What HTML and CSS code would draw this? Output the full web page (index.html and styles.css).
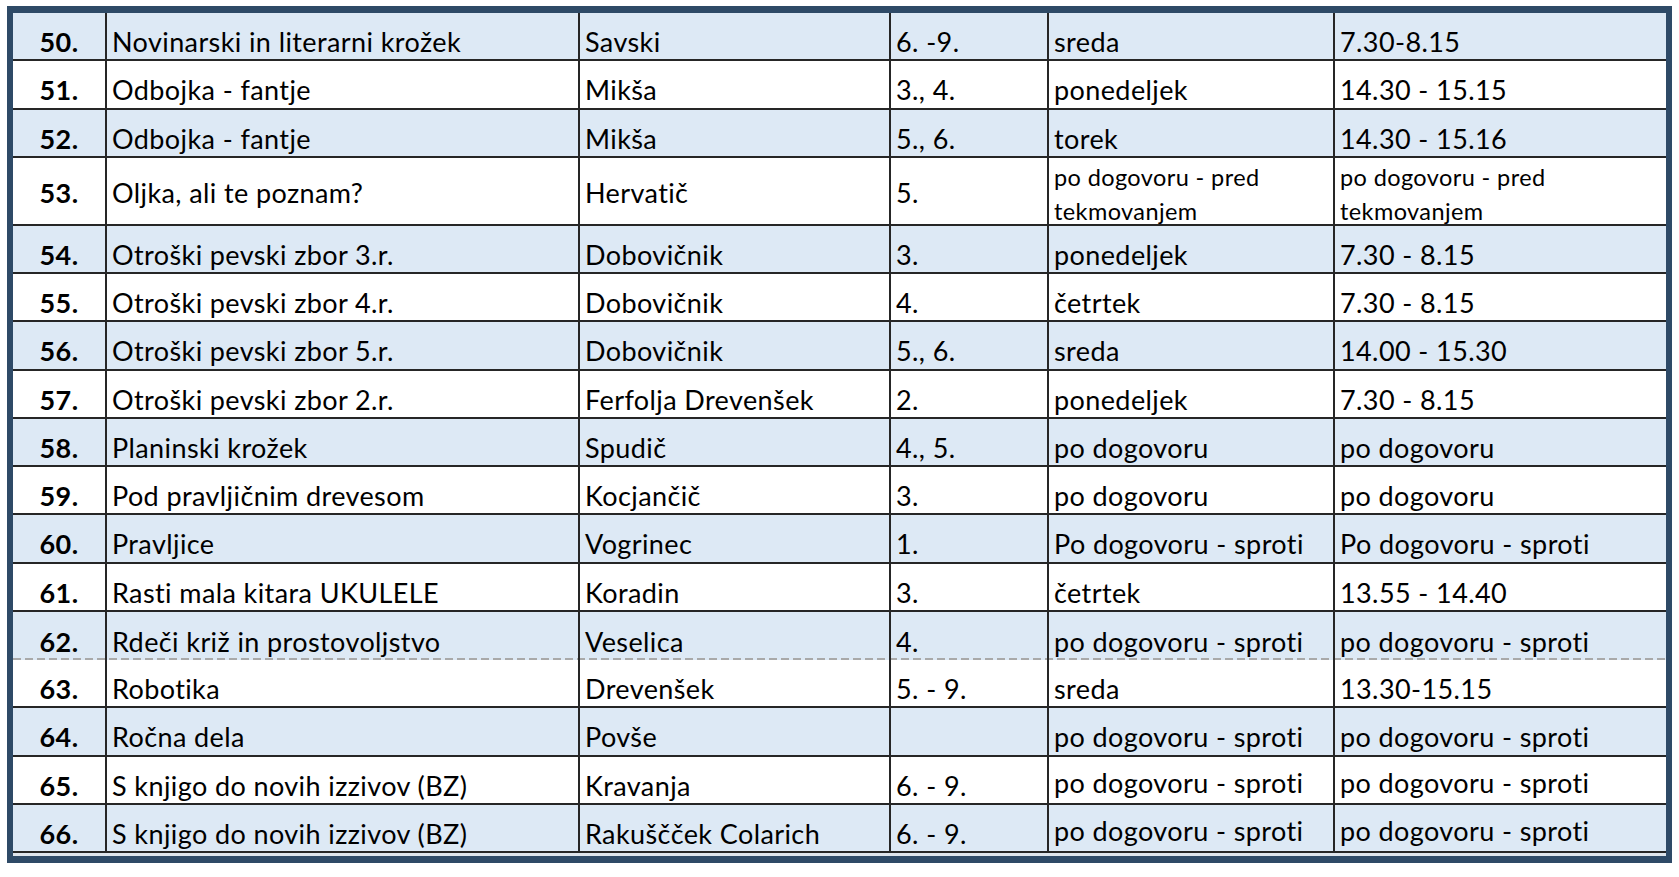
FILE: index.html
```html
<!DOCTYPE html>
<html lang="sl">
<head>
<meta charset="utf-8">
<title>Interesne dejavnosti</title>
<link rel="stylesheet" href="styles.css">
</head>
<body>
<div class="frame">
  <div class="row alt"><div class="c num">50.</div><div class="c">Novinarski in literarni krožek</div><div class="c">Savski</div><div class="c">6. -9.</div><div class="c">sreda</div><div class="c">7.30-8.15</div></div>
  <div class="row"><div class="c num">51.</div><div class="c">Odbojka - fantje</div><div class="c">Mikša</div><div class="c">3., 4.</div><div class="c">ponedeljek</div><div class="c">14.30 - 15.15</div></div>
  <div class="row alt"><div class="c num">52.</div><div class="c">Odbojka - fantje</div><div class="c">Mikša</div><div class="c">5., 6.</div><div class="c">torek</div><div class="c">14.30 - 15.16</div></div>
  <div class="row tall"><div class="c num">53.</div><div class="c">Oljka, ali te poznam?</div><div class="c">Hervatič</div><div class="c">5.</div><div class="c small">po dogovoru - pred<br>tekmovanjem</div><div class="c small">po dogovoru - pred<br>tekmovanjem</div></div>
  <div class="row alt"><div class="c num">54.</div><div class="c">Otroški pevski zbor 3.r.</div><div class="c">Dobovičnik</div><div class="c">3.</div><div class="c">ponedeljek</div><div class="c">7.30 - 8.15</div></div>
  <div class="row"><div class="c num">55.</div><div class="c">Otroški pevski zbor 4.r.</div><div class="c">Dobovičnik</div><div class="c">4.</div><div class="c">četrtek</div><div class="c">7.30 - 8.15</div></div>
  <div class="row alt"><div class="c num">56.</div><div class="c">Otroški pevski zbor 5.r.</div><div class="c">Dobovičnik</div><div class="c">5., 6.</div><div class="c">sreda</div><div class="c">14.00 - 15.30</div></div>
  <div class="row"><div class="c num">57.</div><div class="c">Otroški pevski zbor 2.r.</div><div class="c">Ferfolja Drevenšek</div><div class="c">2.</div><div class="c">ponedeljek</div><div class="c">7.30 - 8.15</div></div>
  <div class="row alt"><div class="c num">58.</div><div class="c">Planinski krožek</div><div class="c">Spudič</div><div class="c">4., 5.</div><div class="c">po dogovoru</div><div class="c">po dogovoru</div></div>
  <div class="row"><div class="c num">59.</div><div class="c">Pod pravljičnim drevesom</div><div class="c">Kocjančič</div><div class="c">3.</div><div class="c">po dogovoru</div><div class="c">po dogovoru</div></div>
  <div class="row alt"><div class="c num">60.</div><div class="c">Pravljice</div><div class="c">Vogrinec</div><div class="c">1.</div><div class="c">Po dogovoru - sproti</div><div class="c">Po dogovoru - sproti</div></div>
  <div class="row"><div class="c num">61.</div><div class="c">Rasti mala kitara UKULELE</div><div class="c">Koradin</div><div class="c">3.</div><div class="c">četrtek</div><div class="c">13.55 - 14.40</div></div>
  <div class="row alt dashed"><div class="c num">62.</div><div class="c">Rdeči križ in prostovoljstvo</div><div class="c">Veselica</div><div class="c">4.</div><div class="c">po dogovoru - sproti</div><div class="c">po dogovoru - sproti</div></div>
  <div class="row"><div class="c num">63.</div><div class="c">Robotika</div><div class="c">Drevenšek</div><div class="c">5. - 9.</div><div class="c">sreda</div><div class="c">13.30-15.15</div></div>
  <div class="row alt"><div class="c num">64.</div><div class="c">Ročna dela</div><div class="c">Povše</div><div class="c"></div><div class="c">po dogovoru - sproti</div><div class="c">po dogovoru - sproti</div></div>
  <div class="row"><div class="c num">65.</div><div class="c">S knjigo do novih izzivov (BZ)</div><div class="c">Kravanja</div><div class="c">6. - 9.</div><div class="c hi">po dogovoru - sproti</div><div class="c hi">po dogovoru - sproti</div></div>
  <div class="row alt last"><div class="c num">66.</div><div class="c">S knjigo do novih izzivov (BZ)</div><div class="c">Rakuščček Colarich</div><div class="c">6. - 9.</div><div class="c hi">po dogovoru - sproti</div><div class="c hi">po dogovoru - sproti</div></div>
</div>
</body>
</html>
```
FILE: styles.css
```css
html, body {
  margin: 0;
  padding: 0;
  background: #ffffff;
}

body {
  padding: 6px 0 0 7px;
  font-family: "Lato", "Liberation Sans", sans-serif;
  color: #000;
}

.frame {
  width: 1653px;
  border: 6px solid #2e4a67;
  border-top-width: 7px;
  border-bottom-width: 7px;
  padding-bottom: 3px;
  background: #dfe5ec;
}

.row {
  display: grid;
  grid-template-columns: 94px 473px 311px 158px 286px 331px;
  height: 48.25px;
  box-sizing: border-box;
  border-bottom: 2px solid #262626;
  background: #ffffff;
}

.row.alt {
  background-color: #dde9f5;
}

.row.tall {
  height: 68px;
}

.row.dashed {
  border-bottom: none;
  background-image: repeating-linear-gradient(to right, #a9a9a9 0 8px, transparent 8px 12px);
  background-size: 100% 2px;
  background-position: left bottom;
  background-repeat: no-repeat;
}

.c {
  display: flex;
  align-items: center;
  padding: 11px 0 0 5px;
  border-right: 2px solid #262626;
  font-size: 27px;
  letter-spacing: 0.4px;
  white-space: nowrap;
  overflow: hidden;
}

.row .c.hi {
  padding-top: 5px;
}

.row.tall .c {
  padding-top: 3px;
}

.c:last-child {
  border-right: none;
}

.c.num {
  justify-content: center;
  padding-left: 0;
  font-weight: 700;
}

.row .c.small {
  display: block;
  font-size: 23.5px;
  line-height: 34.5px;
  padding-top: 2px;
  white-space: normal;
}
```
